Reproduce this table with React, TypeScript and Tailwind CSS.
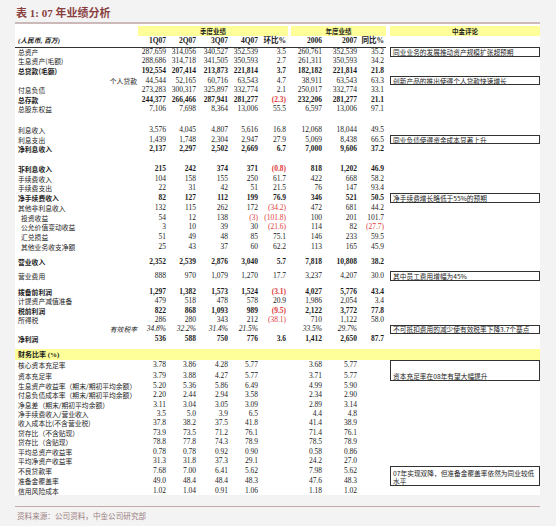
import React from 'react'

type Line =
  | {
      k: 'r'
      label: string
      v: string[]
      h: number
      b?: boolean
      i?: boolean
      ind?: boolean
      right?: boolean
      c?: string
      cspan?: number
      ch?: number
      skip?: boolean
    }
  | { k: 'g'; h: number }
  | { k: 'y'; h: number }

const r = (label: string, v: string, h: number, o: Partial<Extract<Line, { k: 'r' }>> = {}): Line => ({
  k: 'r',
  label,
  v: v.split('|'),
  h,
  ...o,
})

const lines: Line[] = [
  r('总资产', '287,659|314,056|340,527|352,539|3.5|260,761|352,539|35.2', 9.6, { c: '同业业务的发展推动资产规模扩张超预期' }),
  r('生息资产(毛额)', '288,686|314,718|341,505|350,593|2.7|261,311|350,593|34.2', 9.6),
  r('总贷款(毛额)', '192,554|207,414|213,873|221,814|3.7|182,182|221,814|21.8', 9.6, { b: true }),
  r('个人贷款', '44,544|52,165|60,716|63,543|4.7|38,911|63,543|63.3', 9.6, { right: true, c: '创新产品的推出使得个人贷款快速增长' }),
  r('付息负债', '273,283|300,317|325,897|332,774|2.1|250,017|332,774|33.1', 9.6),
  r('总存款', '244,377|266,466|287,941|281,277|(2.3)|232,206|281,277|21.1', 9.6, { b: true }),
  r('总股东权益', '7,106|7,698|8,364|13,006|55.5|6,597|13,006|97.1', 9.6),
  { k: 'g', h: 11 },
  r('利息收入', '3,576|4,045|4,807|5,616|16.8|12,068|18,044|49.5', 9.6),
  r('利息支出', '1,439|1,748|2,304|2,947|27.9|5,069|8,438|66.5', 9.6, { c: '同业负债使得资金成本显著上升' }),
  r('净利息收入', '2,137|2,297|2,502|2,669|6.7|7,000|9,606|37.2', 9.6, { b: true }),
  { k: 'g', h: 10 },
  r('非利息收入', '215|242|374|371|(0.8)|818|1,202|46.9', 9.75, { b: true }),
  r('手续费收入', '104|158|155|250|61.7|422|668|58.2', 9.75),
  r('手续费支出', '22|31|42|51|21.5|76|147|93.4', 9.75),
  r('净手续费收入', '82|127|112|199|76.9|346|521|50.5', 9.75, { b: true, c: '净手续费增长略低于55%的预期' }),
  r('其他非利息收入', '132|115|262|172|(34.2)|472|681|44.2', 9.75),
  r('投资收益', '54|12|138|(3)|(101.8)|100|201|101.7', 9.75, { ind: true }),
  r('公允价值变动收益', '3|10|39|30|(21.6)|114|82|(27.7)', 9.75, { ind: true }),
  r('汇兑损益', '51|49|48|85|75.1|146|233|59.5', 9.75, { ind: true }),
  r('其他业务收支净额', '25|43|37|60|62.2|113|165|45.9', 9.75, { ind: true }),
  { k: 'g', h: 5.5 },
  r('营业收入', '2,352|2,539|2,876|3,040|5.7|7,818|10,808|38.2', 9.6, { b: true }),
  { k: 'g', h: 4.5 },
  r('营业费用', '888|970|1,079|1,270|17.7|3,237|4,207|30.0', 9.6, { c: '其中员工费用增幅为45%' }),
  { k: 'g', h: 6.2 },
  r('拨备前利润', '1,297|1,382|1,573|1,524|(3.1)|4,027|5,776|43.4', 9.4, { b: true }),
  r('计提资产减值准备', '479|518|478|578|20.9|1,986|2,054|3.4', 9.4),
  r('税前利润', '822|868|1,093|989|(9.5)|2,122|3,772|77.8', 9.4, { b: true }),
  r('所得税', '286|280|343|212|(38.1)|710|1,122|58.0', 9.4),
  r('有效税率', '34.8%|32.2%|31.4%|21.5%||33.5%|29.7%|', 9.4, { i: true, right: true, c: '不可抵扣费用的减少使有效税率下降3.7个基点' }),
  r('净利润', '536|588|750|776|3.6|1,412|2,650|87.7', 9.4, { b: true }),
  { k: 'g', h: 5.5 },
  { k: 'y', h: 11 },
  r('核心资本充足率', '3.78|3.86|4.28|5.77||3.68|5.77|', 9.46, { c: '资本充足率在08年有望大幅提升', cspan: 2, ch: 21 }),
  r('资本充足率', '3.79|3.88|4.27|5.77||3.71|5.77|', 9.46, { skip: true }),
  r('生息资产收益率（期末/期初平均余额）', '5.20|5.36|5.86|6.49||4.99|5.90|', 9.46),
  r('付息负债成本率（期末/期初平均余额）', '2.20|2.44|2.94|3.58||2.34|2.90|', 9.46),
  r('净息差（期末/期初平均余额）', '3.11|3.04|3.05|3.09||2.89|3.14|', 9.46),
  r('净手续费收入/营业收入', '3.5|5.0|3.9|6.5||4.4|4.8|', 9.46),
  r('收入成本比(不含营业税)', '37.8|38.2|37.5|41.8||41.4|38.9|', 9.46),
  r('贷存比（不含贴现）', '73.9|73.5|71.2|76.1||71.4|76.1|', 9.46),
  r('贷存比（含贴现）', '78.8|77.8|74.3|78.9||78.5|78.9|', 9.46),
  r('平均总资产收益率', '0.78|0.78|0.92|0.90||0.58|0.86|', 9.46),
  r('平均净资产收益率', '31.3|31.8|37.3|29.1||24.2|27.0|', 9.46),
  r('不良贷款率', '7.68|7.00|6.41|5.62||7.98|5.62|', 9.46, { c: '07年实现双降，但准备金覆盖率依然为同业较低\n水平', cspan: 2, ch: 20 }),
  r('准备金覆盖率', '49.0|48.4|48.4|48.3||47.6|48.3|', 9.46, { skip: true }),
  r('信用风险成本', '1.02|1.04|0.91|1.06||1.18|1.02|', 9.46),
]

const heads = ['1Q07', '2Q07', '3Q07', '4Q07', '环比%', '2006', '2007', '同比%']
const widths = ['w-[123px]', 'w-[30px]', 'w-[30px]', 'w-[32px]', 'w-[30px]', 'w-[28px]', 'w-[36px]', 'w-[35px]', 'w-[27px]', 'w-[4px]', 'w-[150px]']

function Comment({ text, h, multi }: { text: string; h: number; multi?: boolean }) {
  return (
    <div
      className={`border border-[#333] px-[2px] text-[6.7px] leading-[8px] text-[#222] font-['Noto_Sans_CJK_SC',sans-serif] flex ${multi ? 'flex-col justify-end' : 'items-center'} whitespace-pre overflow-hidden`}
      style={{ height: h }}
    >
      {text}
    </div>
  )
}

export default function App() {
  return (
    <div className="w-[556px] h-[526px] overflow-hidden bg-[#f3f3f3] font-['Liberation_Serif','Noto_Sans_CJK_SC',serif] text-[#1c1c1c]">
      <div className="h-[22px] pl-[16px] pt-[7px] text-[11px] leading-[12px] font-bold text-[#8a3f3f]">
        表 1: 07 年业绩分析
      </div>
      <div className="ml-[15px] w-[525px] h-[2px] bg-[#ccb9b9]" />
      <div className="ml-[15px] w-[525px] h-[471px] bg-white pt-[2px]">
        <table className="table-fixed w-[525px]">
          <colgroup>
            {widths.map((w, i) => (
              <col key={i} className={w} />
            ))}
          </colgroup>
          <tbody>
            <tr className="h-[10px]">
              <td className="p-0" />
              <td colSpan={5} className="p-0">
                <div className="h-[10px] bg-[#ffff99] text-center text-[6.5px] leading-[10px] font-bold font-['Noto_Sans_CJK_SC',sans-serif]">季度业绩</div>
              </td>
              <td colSpan={3} className="p-0">
                <div className="ml-[3px] h-[10px] bg-[#ffff99] text-center text-[6.5px] leading-[10px] font-bold font-['Noto_Sans_CJK_SC',sans-serif]">年度业绩</div>
              </td>
              <td className="p-0" />
              <td className="p-0">
                <div className="h-[10px] bg-[#ffff99] text-center text-[6.5px] leading-[10px] font-bold font-['Noto_Sans_CJK_SC',sans-serif]">中金评论</div>
              </td>
            </tr>
            <tr className="h-[11px]">
              <td className="p-0 pl-[3px] border-b border-[#333] text-[6.8px] leading-[10px] italic font-bold whitespace-nowrap">(人民币, 百万)</td>
              {heads.map((h) => (
                <td key={h} className="p-0 pr-[2px] border-b border-[#333] text-right text-[7.5px] leading-[10px] font-bold whitespace-nowrap">
                  {h}
                </td>
              ))}
              <td className="p-0" />
              <td className="p-0" />
            </tr>
            {lines.map((l, idx) => {
              if (l.k === 'g')
                return (
                  <tr key={idx} style={{ height: l.h }}>
                    <td colSpan={11} className="p-0" />
                  </tr>
                )
              if (l.k === 'y')
                return (
                  <tr key={idx} style={{ height: l.h }}>
                    <td colSpan={11} className="p-0">
                      <div className="h-[11px] bg-[#ffff99] pl-[3px] text-[7px] leading-[11px] font-bold whitespace-nowrap">
                        <span className="font-['Noto_Sans_CJK_SC',sans-serif]">财务比率</span> (%)
                      </div>
                    </td>
                  </tr>
                )
              return (
                <tr key={idx} style={{ height: l.h }}>
                  <td
                    className={`p-0 whitespace-nowrap text-[6.8px] leading-[8px] font-['Noto_Sans_CJK_SC',sans-serif] ${l.right ? 'text-right pr-[1px]' : l.ind ? 'pl-[6px]' : 'pl-[3px]'} ${l.b ? 'font-bold' : ''} ${l.i ? 'italic' : ''}`}
                  >
                    {l.label}
                  </td>
                  {l.v.map((v, j) => (
                    <td
                      key={j}
                      className={`p-0 pr-[2px] text-right whitespace-nowrap text-[7.5px] leading-[8px] ${l.b ? 'font-bold' : ''} ${l.i ? 'italic' : ''} ${v.startsWith('(') ? 'text-[#e03a3a]' : ''}`}
                    >
                      {v}
                    </td>
                  ))}
                  <td className="p-0" />
                  {l.skip ? null : l.c ? (
                    <td rowSpan={l.cspan ?? 1} className="p-0 align-top">
                      <Comment text={l.c} h={l.ch ?? l.h} multi={!!l.cspan} />
                    </td>
                  ) : (
                    <td className="p-0" />
                  )}
                </tr>
              )
            })}
          </tbody>
        </table>
      </div>
      <div className="ml-[15px] w-[525px] mt-[11px] h-px bg-[#c6a8a8]" />
      <div className="pl-[17px] mt-[4px] text-[7.6px] leading-[9px] text-[#9c8282] font-['Noto_Sans_CJK_SC',sans-serif]">
        资料来源：公司资料，中金公司研究部
      </div>
    </div>
  )
}
